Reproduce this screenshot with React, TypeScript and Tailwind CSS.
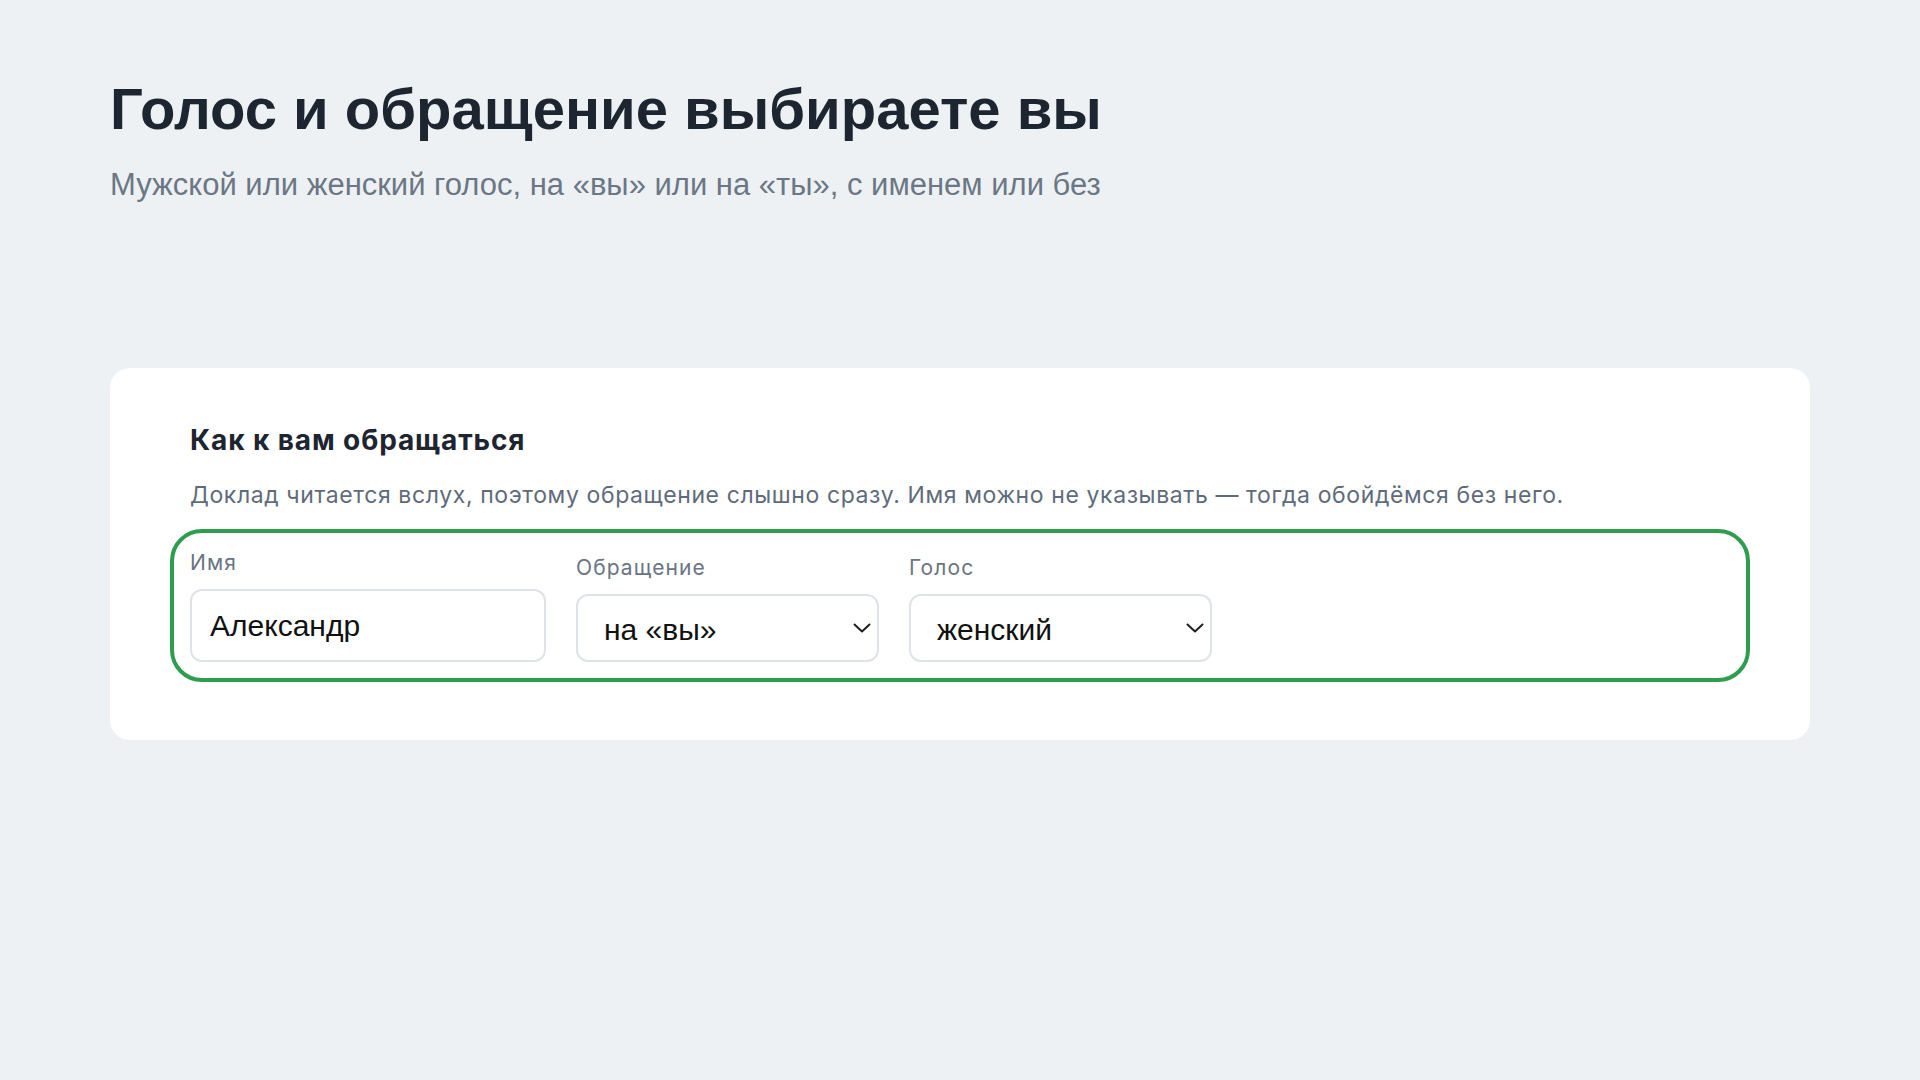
import React, { useState } from "react";

const Chevron = () => (
  <svg
    className="pointer-events-none absolute right-[8px] top-1/2 -translate-y-1/2"
    width="18"
    height="10"
    viewBox="0 0 18 10"
    fill="none"
  >
    <path d="M1.5 1.5 L9 8.5 L16.5 1.5" stroke="#1f1f1f" strokeWidth="2" strokeLinecap="round" strokeLinejoin="round" />
  </svg>
);

interface SelectFieldProps {
  label: string;
  value: string;
  options: string[];
  onChange: (v: string) => void;
}

const SelectField = ({ label, value, options, onChange }: SelectFieldProps) => {
  return (
    <div className="flex w-[303px] flex-col">
      <label className="text-[21px] leading-[28px] tracking-[1.1px] text-[#6a7483]">{label}</label>
      <div className="relative mt-[12px]">
        <select
          value={value}
          onChange={(e) => onChange(e.target.value)}
          className="h-[68px] w-full appearance-none rounded-[12px] border-2 border-[#dfe3e8] bg-white pl-[26px] pr-[40px] pt-[2px] text-[30px] text-[#111111] font-['Liberation_Sans',Arial,sans-serif] outline-none"
        >
          {options.map((o) => (
            <option key={o} value={o}>
              {o}
            </option>
          ))}
        </select>
        <Chevron />
      </div>
    </div>
  );
};

export default function App() {
  const [name, setName] = useState("Александр");
  const [address, setAddress] = useState("на «вы»");
  const [voice, setVoice] = useState("женский");

  return (
    <div className="min-h-screen w-full bg-[#edf1f4] px-[110px] pt-[73px]">
      <h1 className="text-[58px] font-bold leading-[72px] text-[#1d2530] font-['Liberation_Sans',Arial,sans-serif]">
        Голос и обращение выбираете вы
      </h1>
      <p className="mt-[22px] text-[31px] leading-[36px] text-[#6c7785] font-['Liberation_Sans',Arial,sans-serif]">
        Мужской или женский голос, на «вы» или на «ты», с именем или без
      </p>

      <div className="mt-[165px] rounded-[20px] bg-white px-[80px] pt-[56px] pb-[58px] font-['Inter',sans-serif]">
        <h2 className="text-[28px] font-bold leading-[32px] tracking-[0.9px] text-[#1d2530]">Как к вам обращаться</h2>
        <p className="mt-[23px] text-[23px] leading-[33px] tracking-[0.6px] text-[#5f6b7b]">
          Доклад читается вслух, поэтому обращение слышно сразу. Имя можно не указывать — тогда обойдёмся без него.
        </p>

        <div className="-mx-[20px] mt-[17px] flex items-end gap-[30px] rounded-[32px] border-4 border-[#2e9d4e] px-[16px] pt-[16px] pb-[16px]">
          <div className="flex w-[356px] flex-col">
            <label className="text-[21px] leading-[28px] tracking-[1.1px] text-[#6a7483]">Имя</label>
            <input
              value={name}
              onChange={(e) => setName(e.target.value)}
              className="mt-[12px] h-[73px] w-full rounded-[12px] border-2 border-[#dfe3e8] bg-white px-[18px] text-[30px] text-[#111111] font-['Liberation_Sans',Arial,sans-serif] outline-none"
            />
          </div>
          <SelectField label="Обращение" value={address} options={["на «вы»", "на «ты»"]} onChange={setAddress} />
          <SelectField label="Голос" value={voice} options={["женский", "мужской"]} onChange={setVoice} />
        </div>
      </div>
    </div>
  );
}
